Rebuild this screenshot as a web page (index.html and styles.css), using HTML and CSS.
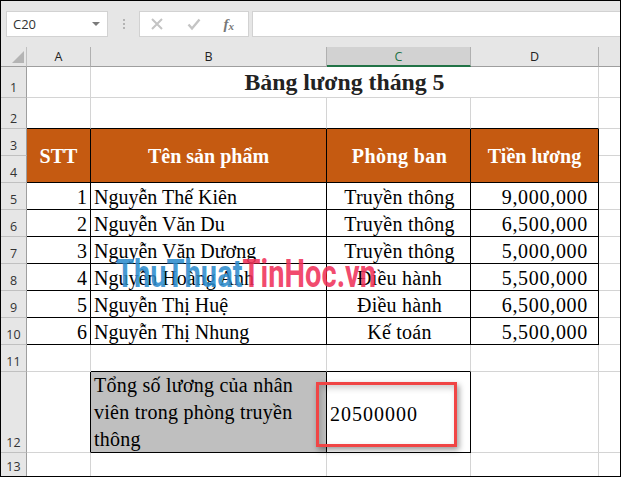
FILE: index.html
```html
<!DOCTYPE html>
<html lang="vi">
<head>
<meta charset="utf-8">
<title>Bảng lương tháng 5</title>
<link rel="stylesheet" href="styles.css">
</head>
<body>
<div class="window">
  <div class="toolbar">
    <div class="namebox"><span>C20</span><i class="caret"></i></div>
    <div class="grip"><i></i><i></i><i></i></div>
    <div class="fxbox">
      <svg class="ic" width="14" height="14" viewBox="0 0 14 14"><path d="M2 2 L12 12 M12 2 L2 12" stroke="#c4c4c4" stroke-width="2" fill="none"/></svg>
      <svg class="ic" width="14" height="14" viewBox="0 0 14 14"><path d="M1.5 7.5 L5 11.5 L12.5 2.5" stroke="#c4c4c4" stroke-width="2.4" fill="none"/></svg>
      <span class="fx">f<sub>x</sub></span>
    </div>
    <div class="formula"></div>
  </div>
  <div class="sheet">
    <div class="corner"><i></i></div>
    <div class="ch">A</div><div class="ch">B</div><div class="ch sel">C</div><div class="ch">D</div><div class="ch last"></div>

    <div class="rh">1</div><div class="c"></div><div class="c title">Bảng lương tháng 5</div><div class="c e"></div>
    <div class="rh">2</div><div class="c bb"></div><div class="c bb"></div><div class="c bb"></div><div class="c bb"></div><div class="c e"></div>

    <div class="rh">3</div><div class="c th span2">STT</div><div class="c th span2">Tên sản phẩm</div><div class="c th span2 wide">Phòng ban</div><div class="c th span2">Tiền lương</div><div class="c e"></div>
    <div class="rh">4</div><div class="c e"></div>

    <div class="rh">5</div><div class="c t r">1</div><div class="c t">Nguyễn Thế Kiên</div><div class="c t m">Truyền thông</div><div class="c t n">9,000,000</div><div class="c e"></div>
    <div class="rh">6</div><div class="c t r">2</div><div class="c t">Nguyễn Văn Du</div><div class="c t m">Truyền thông</div><div class="c t n">6,500,000</div><div class="c e"></div>
    <div class="rh">7</div><div class="c t r">3</div><div class="c t">Nguyễn Văn Dương</div><div class="c t m">Truyền thông</div><div class="c t n">5,000,000</div><div class="c e"></div>
    <div class="rh">8</div><div class="c t r">4</div><div class="c t">Nguyễn Hoàng Anh</div><div class="c t m">Điều hành</div><div class="c t n">5,500,000</div><div class="c e"></div>
    <div class="rh">9</div><div class="c t r">5</div><div class="c t">Nguyễn Thị Huệ</div><div class="c t m">Điều hành</div><div class="c t n">6,500,000</div><div class="c e"></div>
    <div class="rh">10</div><div class="c t r">6</div><div class="c t">Nguyễn Thị Nhung</div><div class="c t m">Kế toán</div><div class="c t n">5,500,000</div><div class="c e"></div>

    <div class="rh">11</div><div class="c"></div><div class="c bb"></div><div class="c bb"></div><div class="c"></div><div class="c e"></div>
    <div class="rh">12</div><div class="c ar"></div><div class="c t total">Tổng số lương của nhân viên trong phòng truyền thông</div><div class="c t sum">20500000</div><div class="c"></div><div class="c e"></div>
    <div class="rh end">13</div><div class="c end"></div><div class="c end"></div><div class="c end"></div><div class="c end"></div><div class="c e end"></div>

    <div class="watermark"><span class="wb">ThuThuat</span><span class="wr">TinHoc.vn</span></div>
    <div class="callout"></div>
  </div>
</div>
</body>
</html>
```

FILE: styles.css
```css
* { box-sizing: border-box; }
html, body { margin: 0; padding: 0; background: #fff; }
.window {
  width: 621px; height: 477px; overflow: hidden;
  border: 1px solid #000; background: #e6e6e6;
  display: flex; flex-direction: column;
  font-family: "Open Sans", "Liberation Sans", sans-serif;
}
.toolbar {
  height: 46px; padding: 10px 0 0 5px;
  display: flex; align-items: flex-start;
}
.namebox, .fxbox, .formula {
  height: 26px; background: #fff; border: 1px solid #d2d2d2;
  display: flex; align-items: center;
}
.namebox { width: 102px; padding: 0 7px 0 6px; justify-content: space-between; font-size: 13px; color: #333; }
.caret { width: 0; height: 0; border: 4px solid transparent; border-top: 4px solid #7a7a7a; border-bottom: 0; }
.grip { width: 31px; display: flex; flex-direction: column; align-items: center; gap: 2px; padding-top: 8px; }
.grip i { width: 2px; height: 2px; background: #b4b4b4; display: block; }
.fxbox { width: 110px; padding: 0 14px 0 10px; justify-content: space-between; }
.fx { font: italic bold 15px "Liberation Serif", serif; color: #777; }
.fx sub { font-size: 11px; vertical-align: -1px; line-height: 0; }
.formula { margin-left: 3px; flex: 1; border-right: 0; }

.sheet {
  position: relative; flex: 1; background: #fff;
  display: grid;
  grid-template-columns: 26px 64px 236px 144px 128px 1fr;
  grid-template-rows: 20px 31px 31px 27px 27px repeat(6, 27px) 27px 81px 1fr;
  font-family: "Liberation Serif", serif;
}
.corner, .ch {
  background: #e6e6e6; border-bottom: 1px solid #9e9e9e;
  font: 12.5px/20px "Open Sans", sans-serif; color: #222; text-align: center;
}
.corner { border-right: 1px solid #c0c0c0; position: relative; }
.corner i {
  position: absolute; left: 11px; top: 4px; width: 0; height: 0;
  border-style: solid; border-width: 0 0 12px 12px;
  border-color: transparent transparent #b4b4b4 transparent;
}
.ch { border-right: 1px solid #b0b0b0; }
.ch.last { border-right: 0; }
.ch.sel { background: #d2d2d2; color: #217346; border-bottom: 2px solid #217346; }
.rh {
  grid-column: 1;
  background: #e6e6e6; border-right: 1px solid #9e9e9e; border-bottom: 1px solid #c0c0c0;
  font: 12.5px/16px "Open Sans", sans-serif; color: #333;
  display: flex; align-items: flex-end; justify-content: center; padding-bottom: 1px;
}
.c {
  border-right: 1px solid #d4d4d4; border-bottom: 1px solid #d4d4d4;
  font-size: 20px; color: #000; line-height: 24px;
  display: flex; align-items: flex-end;
  white-space: nowrap; min-width: 0;
}
.e { grid-column: 6; border-right: 0; }
.bb { border-bottom-color: #000; }
.ar { border-right-color: #000; }
.end { border-bottom: 0; }
.title {
  grid-column: span 3; justify-content: center; align-items: center;
  font-size: 23.8px; font-weight: bold; color: #222;
}
.th {
  background: #c55a11; color: #fff; font-weight: bold; font-size: 20px;
  justify-content: center; align-items: center;
  border-right-color: #000; border-bottom-color: #000; grid-row: span 2;
}
.wide { letter-spacing: .4px; padding-left: 2px; }
.t { border-right-color: #000; border-bottom-color: #000; padding-left: 3px; }
.r { justify-content: flex-end; padding: 0 3px 0 0; }
.m { justify-content: center; padding: 0 0 0 2px; letter-spacing: .25px; }
.n { justify-content: flex-end; padding: 0 10px 0 0; letter-spacing: .7px; }
.total {
  background: #bfbfbf; white-space: normal; line-height: 27px;
  padding-right: 10px; letter-spacing: .25px; align-items: flex-start;
}
.sum { align-items: center; padding: 3px 0 0 3px; letter-spacing: 1px; }
.watermark {
  position: absolute; left: 115px; top: 204px;
  font: bold 38px/46px "Roboto", "Liberation Sans", sans-serif;
  white-space: nowrap;
  transform: scaleX(.765); transform-origin: left center;
}
.wb { color: rgba(45, 140, 205, .88); }
.wr { color: rgba(240, 50, 90, .88); }
.callout {
  position: absolute; left: 315px; top: 335px; width: 141px; height: 65px;
  border: 3px solid #f04545;
  box-shadow: 2px 3px 6px rgba(0,0,0,.4), inset 2px 3px 6px rgba(0,0,0,.2);
}
```
